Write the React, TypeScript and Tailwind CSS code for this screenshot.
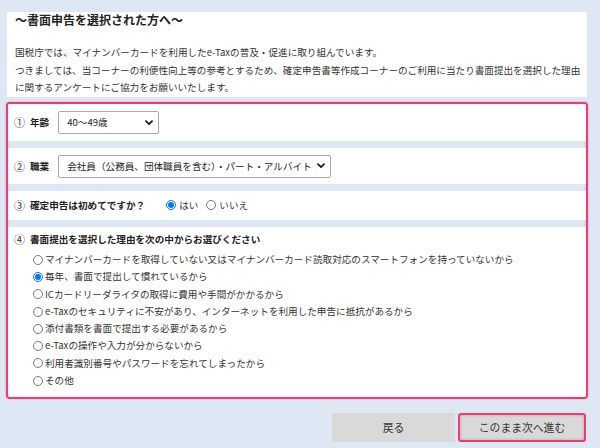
import React from "react";

const options = [
  "マイナンバーカードを取得していない又はマイナンバーカード読取対応のスマートフォンを持っていないから",
  "毎年、書面で提出して慣れているから",
  "ICカードリーダライタの取得に費用や手間がかかるから",
  "e-Taxのセキュリティに不安があり、インターネットを利用した申告に抵抗があるから",
  "添付書類を書面で提出する必要があるから",
  "e-Taxの操作や入力が分からないから",
  "利用者識別番号やパスワードを忘れてしまったから",
  "その他",
];

function Chevron() {
  return (
    <svg width="8" height="6" viewBox="0 0 8 6" className="pointer-events-none">
      <path d="M1 1.2 L4 4.2 L7 1.2" fill="none" stroke="#222" strokeWidth="1.9" strokeLinecap="round" strokeLinejoin="round" />
    </svg>
  );
}

function FakeSelect({ width, text }: { width: string; text: string }) {
  return (
    <div className={`${width} h-[23px] border border-[#a9a9a9] rounded-[2px] bg-white flex items-center justify-between pl-[8px] pr-[5px]`}>
      <span className="whitespace-nowrap text-[9.6px] text-[#222]">{text}</span>
      <Chevron />
    </div>
  );
}

function Num({ c }: { c: string }) {
  return <span className="w-[16px] text-[11px] leading-none text-[#333]">{c}</span>;
}

export default function App() {
  return (
    <div className="w-[600px] h-[448px] overflow-hidden bg-[#dde8f4] text-[#333] font-['Meiryo','Noto_Sans_CJK_JP',sans-serif]">
      <div className="pt-[12px] pl-[7px] pr-[13px]">
        <div className="bg-white h-[85px] pl-[8px]">
          <div className="text-[12px] leading-[16px] font-bold text-[#222]">～書面申告を選択された方へ～</div>
          <div className="mt-[16px] text-[9.6px] leading-[17.6px] whitespace-nowrap">
            <div>国税庁では、マイナンバーカードを利用したe-Taxの普及・促進に取り組んでいます。</div>
            <div>つきましては、当コーナーの利便性向上等の参考とするため、確定申告書等作成コーナーのご利用に当たり書面提出を選択した理由</div>
            <div>に関するアンケートにご協力をお願いいたします。</div>
          </div>
        </div>
      </div>

      <div className="ml-[6px] mr-[12px] mt-[5px] border-2 border-[#f3396f] rounded-[4px] bg-[#dde8f4] overflow-hidden shadow-[0_0_2px_rgba(243,57,111,0.5),inset_0_0_3px_rgba(0,0,0,0.18)]">
        <div className="bg-white h-[37px] flex items-center pl-[6px] text-[9.6px]">
          <Num c="①" />
          <span className="font-bold text-[#222]">年齢</span>
          <div className="ml-[9px]">
            <FakeSelect width="w-[101px]" text="40～49歳" />
          </div>
        </div>
        <div className="bg-white h-[36px] mt-[7px] flex items-center pl-[6px] text-[9.6px]">
          <Num c="②" />
          <span className="font-bold text-[#222]">職業</span>
          <div className="ml-[9px]">
            <FakeSelect width="w-[273px]" text="会社員（公務員、団体職員を含む）・パート・アルバイト" />
          </div>
        </div>
        <div className="bg-white h-[29px] mt-[7px] flex items-center pl-[6px] text-[9.6px]">
          <Num c="③" />
          <span className="font-bold text-[#222]">確定申告は初めてですか？</span>
          <label className="ml-[21px] flex items-center">
            <input type="radio" name="first" defaultChecked className="m-0 w-[10px] h-[10px]" />
            <span className="ml-[3px]">はい</span>
          </label>
          <label className="ml-[8px] flex items-center">
            <input type="radio" name="first" className="m-0 w-[10px] h-[10px]" />
            <span className="ml-[3px]">いいえ</span>
          </label>
        </div>
        <div className="bg-white h-[170px] mt-[7px] pl-[6px] pt-[4px] text-[9.6px] leading-[17.3px]">
          <div className="flex items-center">
            <Num c="④" />
            <span className="font-bold text-[#222]">書面提出を選択した理由を次の中からお選びください</span>
          </div>
          <div className="mt-[2.7px] pl-[19px]">
            {options.map((o, i) => (
              <label key={i} className="flex items-center h-[17.3px] whitespace-nowrap">
                <input type="radio" name="reason" defaultChecked={i === 1} className="m-0 w-[10px] h-[10px]" />
                <span className="ml-[2px]">{o}</span>
              </label>
            ))}
          </div>
        </div>
      </div>

      <div className="flex justify-end mt-[14px] pr-[14px] gap-[3px]">
        <button className="w-[123px] h-[29px] bg-[#d9d9d9] text-[10.8px] text-[#333] flex items-center justify-center">戻る</button>
        <button className="w-[128px] h-[29px] bg-[#d9d9d9] border-2 border-[#f3396f] rounded-[3px] text-[10.8px] text-[#333] flex items-center justify-center shadow-[inset_0_0_3px_rgba(0,0,0,0.25)]">このまま次へ進む</button>
      </div>
    </div>
  );
}
